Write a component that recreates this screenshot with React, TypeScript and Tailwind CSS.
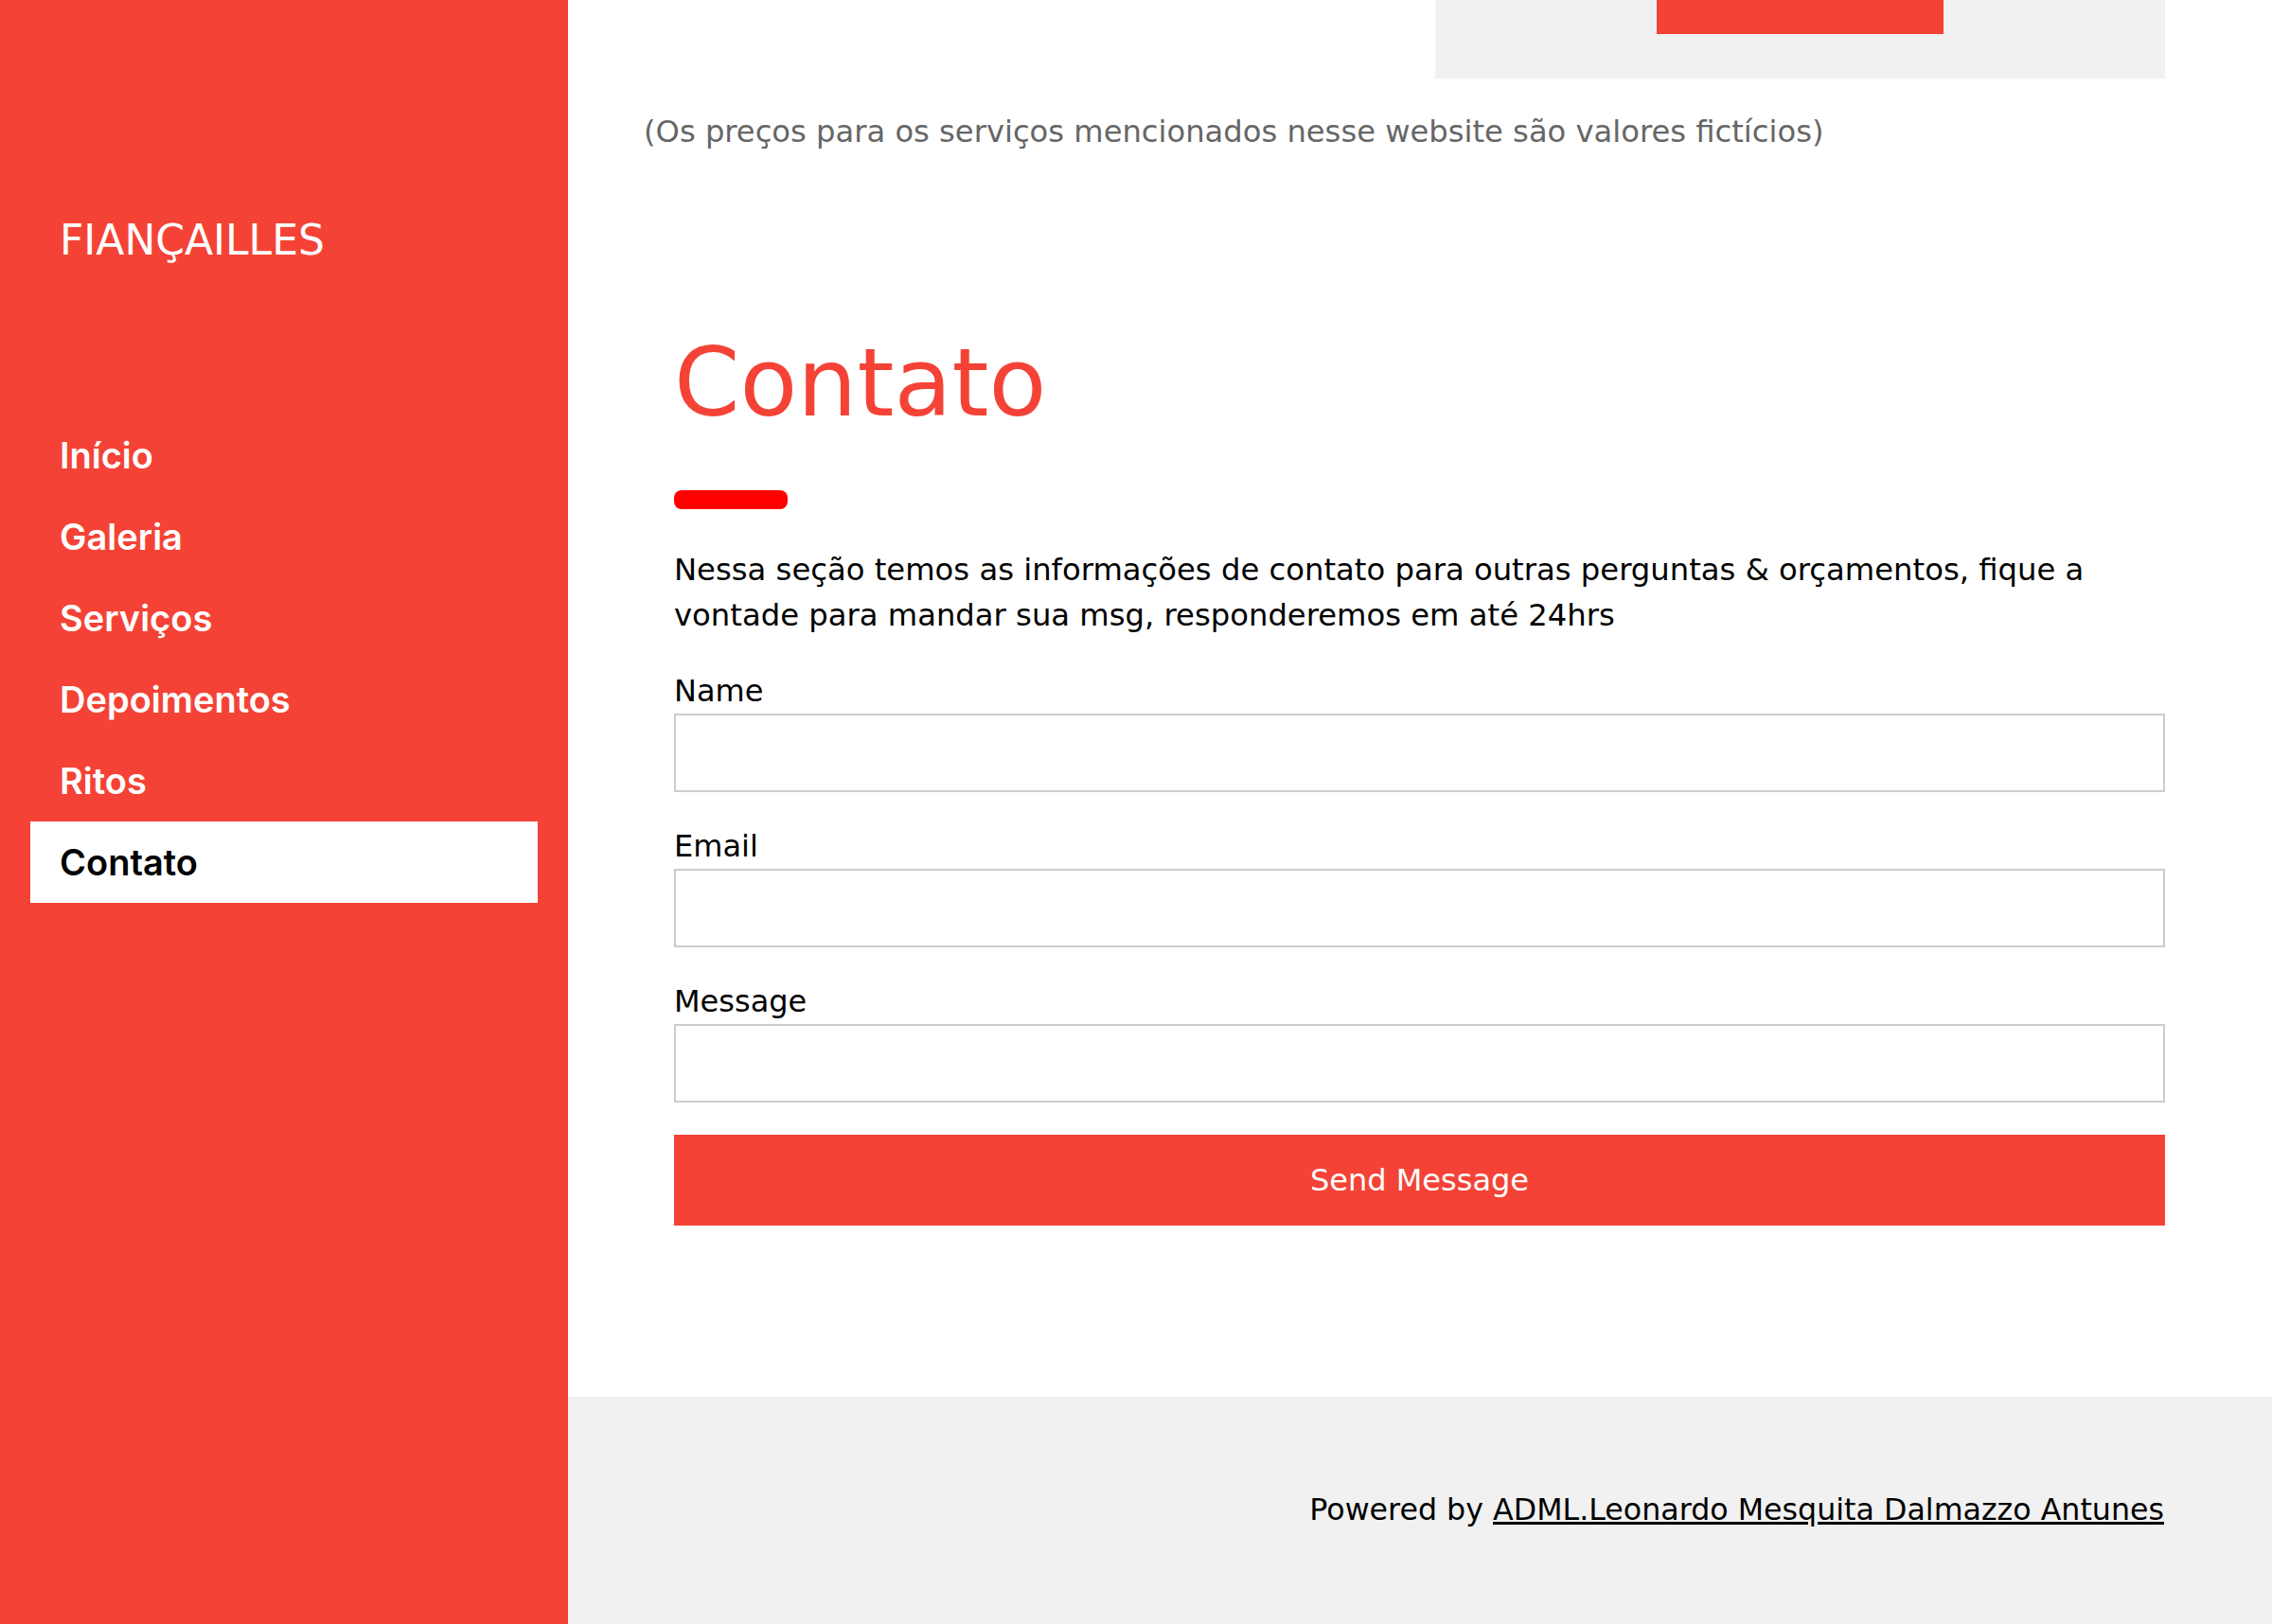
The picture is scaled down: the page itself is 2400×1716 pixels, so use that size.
const navItems = ["Início", "Galeria", "Serviços", "Depoimentos", "Ritos", "Contato"];

function Field({ label, first }: { label: string; first?: boolean }) {
  return (
    <div className={first ? "flex flex-col" : "mt-[33px] flex flex-col"}>
      <label className="block text-[32px] leading-[48px] text-black">{label}</label>
      <input
        type="text"
        className="h-[83px] w-full border-2 border-[#ccc] bg-white px-4 text-[32px] outline-none"
      />
    </div>
  );
}

export default function App() {
  return (
    <div className="flex min-h-screen w-full bg-white font-['DejaVu_Sans',sans-serif] text-black">
      {/* Sidebar */}
      <aside className="flex w-[600px] shrink-0 flex-col bg-[#f44336] px-[32px] pt-[211px]">
        <div className="flex h-[86px] items-center pl-[31px] text-[44px] leading-none text-white">
          FIANÇAILLES
        </div>
        <nav className="mt-[141px] flex flex-col">
          {navItems.map((item) => (
            <a
              key={item}
              href="#"
              className={
                item === "Contato"
                  ? "flex h-[86px] items-center bg-white px-[31px] font-['Inter',sans-serif] text-[38px] font-semibold leading-none text-black"
                  : "flex h-[86px] items-center px-[31px] font-['Inter',sans-serif] text-[38px] font-semibold leading-none text-white"
              }
            >
              {item}
            </a>
          ))}
        </nav>
      </aside>

      {/* Main */}
      <main className="flex min-h-screen flex-1 flex-col">
        <div className="pl-[80px] pr-[113px]">
          {/* bottom of the pricing card above */}
          <div className="flex justify-end">
            <div className="flex h-[83px] w-[771px] justify-center bg-[#f1f1f1]">
              <div className="h-[36px] w-[303px] bg-[#f44336]" />
            </div>
          </div>

          <p className="mt-[32px] text-[32.2px] leading-[48px] text-[#666]">
            (Os preços para os serviços mencionados nesse website são valores fictícios)
          </p>

          <section className="pl-[32px]">
            <h1 className="mt-[192px] text-[99.5px] leading-none text-[#f44336]">Contato</h1>
            <div className="mt-[63px] h-[20px] w-[120px] rounded-[8px] bg-[#ff0000]" />
            <p className="mt-[40px] text-[32.25px] leading-[48px] text-black">
              Nessa seção temos as informações de contato para outras perguntas &amp; orçamentos, fique a
              vontade para mandar sua msg, responderemos em até 24hrs
            </p>

            <form className="mt-[32px] flex flex-col" onSubmit={(e) => e.preventDefault()}>
              <Field label="Name" first />
              <Field label="Email" />
              <Field label="Message" />
              <button
                type="submit"
                className="mt-[34px] h-[96px] w-full bg-[#f44336] text-[32px] text-white"
              >
                Send Message
              </button>
            </form>
          </section>
        </div>

        {/* Footer */}
        <footer className="mt-auto flex h-[240px] items-center justify-end bg-[#f1f1f1] pr-[114px] text-[31.7px] text-black">
          <p>
            Powered by{" "}
            <a href="#" className="underline">
              ADML.Leonardo Mesquita Dalmazzo Antunes
            </a>
          </p>
        </footer>
      </main>
    </div>
  );
}
